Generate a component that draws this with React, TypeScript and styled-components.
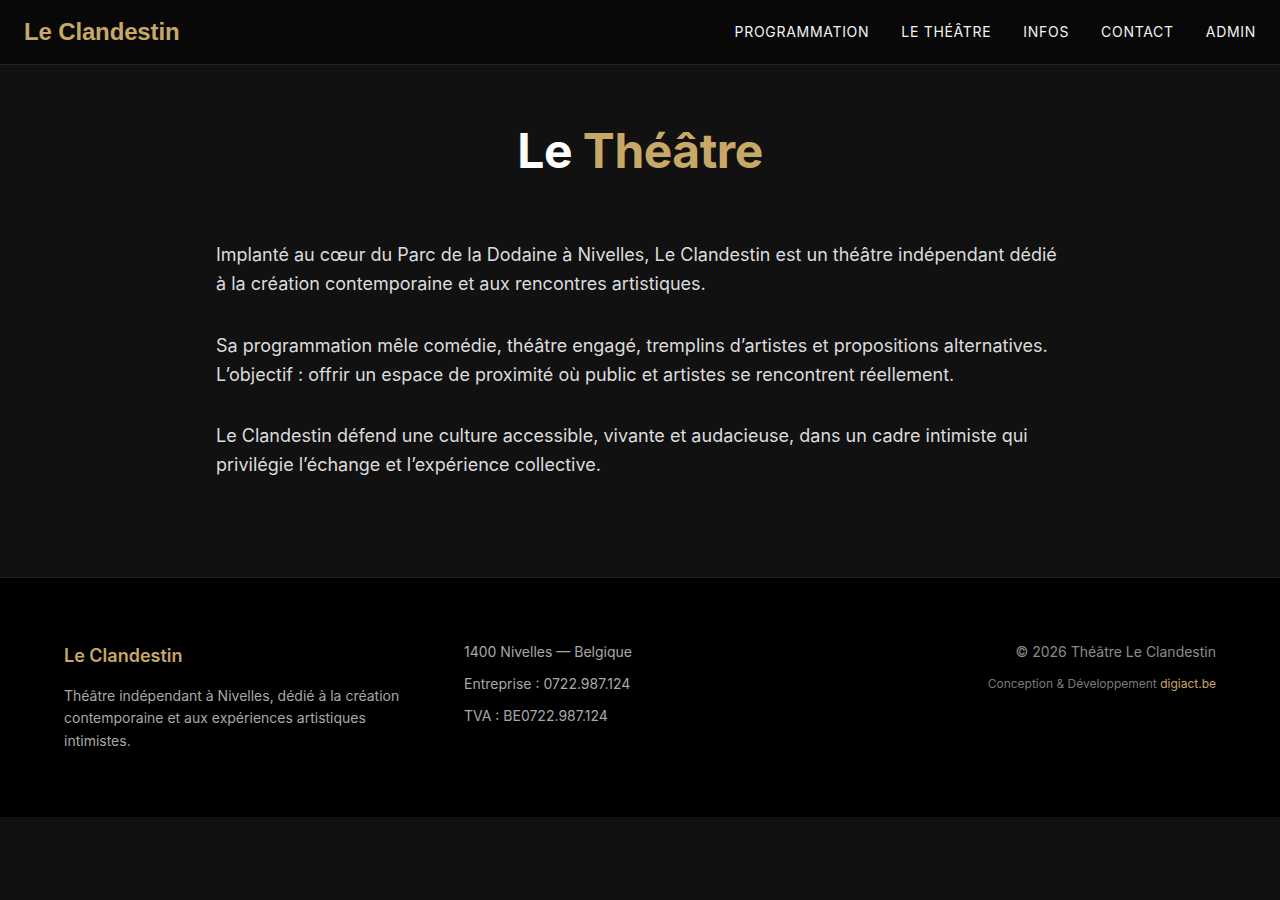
import React from "react";
import styled, { createGlobalStyle } from "styled-components";

const Global = createGlobalStyle`
  html, body { margin: 0; padding: 0; background: #111111; }
  body { font-family: Inter, "Noto Sans", sans-serif; color: #e6e6e6; }
  * { box-sizing: border-box; }
`;

const GOLD = "#c8a866";

const Header = styled.header`
  height: 65px;
  display: flex;
  align-items: center;
  justify-content: space-between;
  padding: 0 24px 1px;
  background: #080808;
  border-bottom: 1px solid #222222;
`;

const Logo = styled.a`
  font-family: "Liberation Sans", Arial, sans-serif;
  font-weight: 700;
  font-size: 24px;
  color: ${GOLD};
  text-decoration: none;
  letter-spacing: -0.15px;
`;

const Nav = styled.nav`
  display: flex;
  gap: 32px;
`;

const NavLink = styled.a`
  font-family: Inter, sans-serif;
  font-size: 14px;
  font-weight: 400;
  letter-spacing: 0.7px;
  text-transform: uppercase;
  color: #f2f2f2;
  text-decoration: none;
`;

const Main = styled.main`
  background: #111111;
  padding: 55px 24px 65.5px;
`;

const Title = styled.h1`
  margin: 0 0 58px;
  text-align: center;
  font-family: Inter, sans-serif;
  font-weight: 700;
  font-size: 48px;
  line-height: 62px;
  color: #ffffff;
  letter-spacing: -0.5px;
`;

const Accent = styled.span`
  color: ${GOLD};
`;

const Content = styled.div`
  max-width: 848px;
  margin: 0 auto;
`;

const Paragraph = styled.p`
  margin: 0 0 32.5px;
  font-size: 18px;
  line-height: 29px;
  color: #dcdcdc;
`;

const Footer = styled.footer`
  background: #000000;
  border-top: 1px solid #1e1e1e;
  padding: 62px 64px 65px;
  display: grid;
  grid-template-columns: repeat(3, 1fr);
  gap: 48px;
`;

const Col = styled.div<{ $align?: "left" | "right" }>`
  display: flex;
  flex-direction: column;
  text-align: ${(p) => p.$align ?? "left"};
  align-items: ${(p) => (p.$align === "right" ? "flex-end" : "flex-start")};
`;

const InfoCol = styled(Col)`
  padding-top: 1px;
`;

const MetaCol = styled(Col)`
  padding-top: 1px;
`;

const FooterBrand = styled.div`
  font-size: 18px;
  font-weight: 600;
  color: ${GOLD};
  margin: 2px 0 15px;
  line-height: 28px;
`;

const FooterText = styled.p`
  margin: 0;
  font-size: 14px;
  line-height: 22.4px;
  color: #a8a8a8;
`;

const InfoLine = styled.p`
  margin: 0 0 9.6px;
  font-size: 14px;
  line-height: 22.4px;
  color: #a8a8a8;
`;

const Copy = styled.p`
  margin: 0 0 11px;
  font-size: 14px;
  line-height: 22.4px;
  color: #8c8c8c;
`;

const Credit = styled.p`
  margin: 0;
  font-size: 12px;
  line-height: 20px;
  color: #7a7a7a;
`;

const CreditLink = styled.a`
  color: ${GOLD};
  text-decoration: none;
`;

export default function App() {
  return (
    <>
      <Global />
      <Header>
        <Logo href="#">Le Clandestin</Logo>
        <Nav>
          <NavLink href="#">Programmation</NavLink>
          <NavLink href="#">Le Théâtre</NavLink>
          <NavLink href="#">Infos</NavLink>
          <NavLink href="#">Contact</NavLink>
          <NavLink href="#">Admin</NavLink>
        </Nav>
      </Header>
      <Main>
        <Title>
          Le <Accent>Théâtre</Accent>
        </Title>
        <Content>
          <Paragraph>
            Implanté au cœur du Parc de la Dodaine à Nivelles, Le Clandestin est un théâtre indépendant dédié à la
            création contemporaine et aux rencontres artistiques.
          </Paragraph>
          <Paragraph>
            Sa programmation mêle comédie, théâtre engagé, tremplins d’artistes et propositions alternatives.
            L’objectif : offrir un espace de proximité où public et artistes se rencontrent réellement.
          </Paragraph>
          <Paragraph>
            Le Clandestin défend une culture accessible, vivante et audacieuse, dans un cadre intimiste qui privilégie
            l’échange et l’expérience collective.
          </Paragraph>
        </Content>
      </Main>
      <Footer>
        <Col>
          <FooterBrand>Le Clandestin</FooterBrand>
          <FooterText>
            Théâtre indépendant à Nivelles, dédié à la création contemporaine et aux expériences artistiques intimistes.
          </FooterText>
        </Col>
        <InfoCol>
          <InfoLine>1400 Nivelles — Belgique</InfoLine>
          <InfoLine>Entreprise : 0722.987.124</InfoLine>
          <InfoLine>TVA : BE0722.987.124</InfoLine>
        </InfoCol>
        <MetaCol $align="right">
          <Copy>© 2026 Théâtre Le Clandestin</Copy>
          <Credit>
            Conception &amp; Développement <CreditLink href="#">digiact.be</CreditLink>
          </Credit>
        </MetaCol>
      </Footer>
    </>
  );
}
